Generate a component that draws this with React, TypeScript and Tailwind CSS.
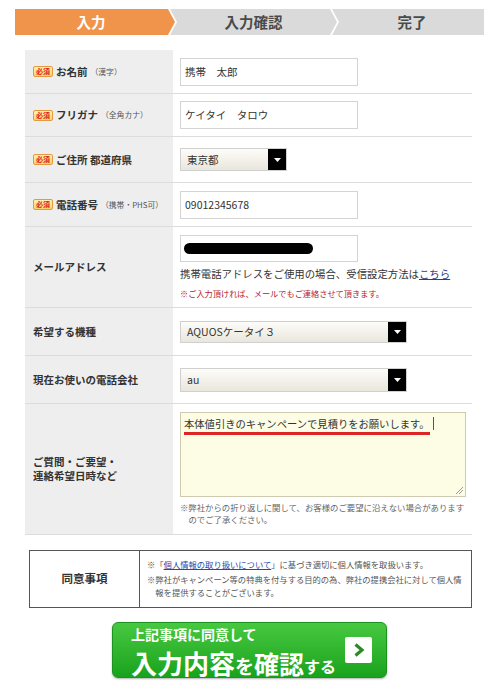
import React from "react";

function Badge() {
  return (
    <span className="inline-flex items-center justify-center w-[20px] h-[11px] mr-[3px] rounded-[2px] border border-[#e39a3c] bg-linear-to-b from-[#fff0b0] to-[#fbd36a] text-[7px] font-bold leading-none text-[#d8261c]">
      必須
    </span>
  );
}

function TextBox({ value, children }: { value?: string; children?: React.ReactNode }) {
  return (
    <div className="flex items-center w-[178px] h-[28px] border border-[#d4d4d4] bg-white pl-[4px] text-[10.5px] text-[#333]">
      {value}
      {children}
    </div>
  );
}

function SelectBox({ value, size }: { value: string; size: string }) {
  return (
    <div className={`flex border border-[#d0d0d0] bg-linear-to-b from-[#fdfcf9] to-[#e9e6dc] ${size}`}>
      <span className="flex-1 flex items-center pl-[6px] text-[10.5px] text-[#333]">{value}</span>
      <span className="w-[18px] bg-black flex items-center justify-center">
        <svg width="7" height="4" viewBox="0 0 7 4">
          <path d="M0 0 H7 L3.5 4 Z" fill="#fff" />
        </svg>
      </span>
    </div>
  );
}

function Row({
  h,
  label,
  children,
  top,
}: {
  h: string;
  label: React.ReactNode;
  children: React.ReactNode;
  top?: boolean;
}) {
  return (
    <div className={`flex border-b border-[#dcdcdc] ${h}`}>
      <div className="w-[148px] shrink-0 bg-[#eeeeee] flex items-center pl-[8px] text-[10.5px] font-bold text-[#333] leading-[14px]">
        {label}
      </div>
      <div className={`flex-1 flex flex-col pl-[7px] ${top ? "justify-start pt-[8px]" : "justify-center"}`}>
        {children}
      </div>
    </div>
  );
}

function Small({ children }: { children: React.ReactNode }) {
  return <span className="ml-[3px] text-[7.8px] font-normal text-[#555]">{children}</span>;
}

export default function App() {
  return (
    <div className="w-[495px] min-h-[684px] bg-white pt-[9px] font-['Noto_Sans_CJK_JP','Noto_Sans',sans-serif] text-[#333]">
      {/* steps */}
      <div className="flex ml-[15px] w-[469px] h-[26px] text-[14.5px] font-bold">
        <div className="w-[160px] bg-[#f0944c] text-white flex items-center justify-center pr-[8px] [clip-path:polygon(0_0,calc(100%_-_7px)_0,100%_50%,calc(100%_-_7px)_100%,0_100%)]">
          入力
        </div>
        <div className="w-[167px] -ml-[5px] bg-[#dadada] text-[#4a4a4a] flex items-center justify-center [clip-path:polygon(0_0,calc(100%_-_7px)_0,100%_50%,calc(100%_-_7px)_100%,0_100%,7px_50%)]">
          入力確認
        </div>
        <div className="w-[152px] -ml-[5px] bg-[#dadada] text-[#4a4a4a] flex items-center justify-center pl-[8px] [clip-path:polygon(0_0,100%_0,100%_100%,0_100%,7px_50%)]">
          完了
        </div>
      </div>

      {/* form */}
      <div className="ml-[25px] w-[447px] mt-[15px]">
        <Row
          h="h-[44px]"
          label={
            <>
              <Badge />
              お名前<Small>（漢字）</Small>
            </>
          }
        >
          <TextBox value="携帯　太郎" />
        </Row>
        <Row
          h="h-[43px]"
          label={
            <>
              <Badge />
              フリガナ<Small>（全角カナ）</Small>
            </>
          }
        >
          <TextBox value="ケイタイ　タロウ" />
        </Row>
        <Row
          h="h-[46px]"
          label={
            <>
              <Badge />
              ご住所 都道府県
            </>
          }
        >
          <SelectBox value="東京都" size="w-[107px] h-[23px]" />
        </Row>
        <Row
          h="h-[44px]"
          label={
            <>
              <Badge />
              電話番号<Small>（携帯・PHS可）</Small>
            </>
          }
        >
          <TextBox value="09012345678" />
        </Row>
        <Row h="h-[81px]" label="メールアドレス" top>
          <div className="flex items-center w-[178px] h-[27px] border border-[#d4d4d4] bg-white pl-[3px]">
            <div className="w-[129px] h-[11px] rounded-full bg-black" />
          </div>
          <div className="mt-[5px] text-[10.4px] leading-[14px] text-[#333] whitespace-nowrap">
            携帯電話アドレスをご使用の場合、受信設定方法は
            <span className="underline text-[#2b3a8c]">こちら</span>
          </div>
          <div className="mt-[6px] text-[8.2px] leading-[12px] text-[#b4232a] whitespace-nowrap">
            ※ご入力頂ければ、メールでもご連絡させて頂きます。
          </div>
        </Row>
        <Row h="h-[48px]" label="希望する機種">
          <SelectBox value="AQUOSケータイ３" size="w-[227px] h-[22px]" />
        </Row>
        <Row h="h-[48px]" label="現在お使いの電話会社">
          <SelectBox value="au" size="w-[227px] h-[24px]" />
        </Row>
        <Row
          h="h-[131px]"
          top
          label={
            <span>
              ご質問・ご要望・
              <br />
              連絡希望日時など
            </span>
          }
        >
          <div className="flex flex-col justify-between w-[286px] h-[85px] border border-[#cfcbb0] bg-[#fdfce5] pt-[4px] pl-[3px] pr-[2px] pb-[2px]">
            <div className="flex items-start text-[10.3px] leading-[13px] text-[#333] whitespace-nowrap">
              <span className="border-b-[3px] border-[#dc2626] pb-[2px]">本体値引きのキャンペーンで見積りをお願いします。</span>
              <span className="ml-[3px] w-px h-[13px] bg-[#555]" />
            </div>
            <div className="flex justify-end">
              <svg width="8" height="8" viewBox="0 0 8 8">
                <path d="M1 8 L8 1 M4 8 L8 4" stroke="#999" strokeWidth="1" />
              </svg>
            </div>
          </div>
          <div className="mt-[4px] text-[8.4px] leading-[12px] text-[#666] pl-[1em] [text-indent:-1em]">
            ※弊社からの折り返しに関して、お客様のご要望に沿えない場合があります
            <br />
            のでご了承ください。
          </div>
        </Row>
      </div>

      {/* agreement */}
      <div className="flex ml-[29px] w-[443px] h-[58px] mt-[15px] border border-[#555]">
        <div className="w-[110px] shrink-0 border-r border-[#555] flex items-center justify-center text-[11.5px] font-bold text-[#333]">
          同意事項
        </div>
        <div className="flex-1 pl-[7px] pt-[7px] text-[8.3px] leading-[13px] text-[#555] whitespace-nowrap">
          <div className="mb-[2px]">
            ※「<span className="underline text-[#2a47a8]">個人情報の取り扱いについて</span>」に基づき適切に個人情報を取扱います。
          </div>
          <div>※弊社がキャンペーン等の特典を付与する目的の為、弊社の提携会社に対して個人情</div>
          <div className="pl-[1em]">報を提供することがございます。</div>
        </div>
      </div>

      {/* button */}
      <div className="flex items-start ml-[112px] mt-[14px] w-[275px] h-[56px] rounded-[6px] border border-[#1c921f] bg-linear-to-b from-[#46c840] to-[#17a31c] shadow-[0_1px_2px_rgba(0,0,0,0.3)] text-white font-bold">
        <div className="flex-1 pl-[18px] pt-[4px]">
          <div className="text-[14px] leading-[14px]">上記事項に同意して</div>
          <div className="flex items-end h-[27px] mt-[8px] whitespace-nowrap">
            <span className="text-[26px] leading-[26px]">入力内容</span>
            <span className="text-[19px] leading-[21px]">を</span>
            <span className="text-[25px] leading-[25px]">確認</span>
            <span className="text-[16px] leading-[19px]">する</span>
          </div>
        </div>
        <div className="mr-[14px] mt-[14px] w-[27px] h-[26px] rounded-[2px] bg-white flex items-center justify-center">
          <svg width="12" height="14" viewBox="0 0 12 14">
            <path d="M2.5 1.5 L9 7 L2.5 12.5" fill="none" stroke="#2c8a22" strokeWidth="3.2" />
          </svg>
        </div>
      </div>
    </div>
  );
}
